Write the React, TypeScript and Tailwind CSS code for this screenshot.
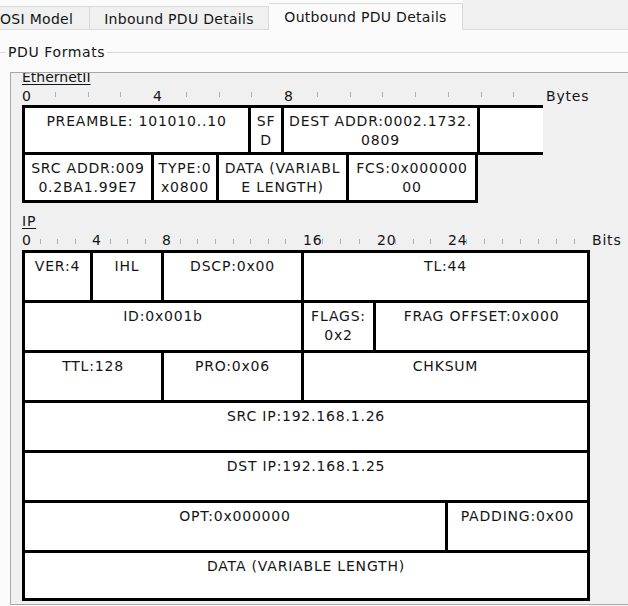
import clsx from 'clsx'

type Cell = { lines: string[]; w: string; open?: boolean }
type Group = { label: string; n: number; w: string }

const ethRows: { h: string; cells: Cell[] }[] = [
  {
    h: 'h-[50px]',
    cells: [
      { lines: ['PREAMBLE: 101010..10'], w: 'w-[229px]' },
      { lines: ['SF', 'D'], w: 'w-[36px]' },
      { lines: ['DEST ADDR:0002.1732.', '0809'], w: 'w-[199px]' },
      { lines: [], w: 'w-[66px]', open: true },
    ],
  },
  {
    h: 'h-[51px]',
    cells: [
      { lines: ['SRC ADDR:009', '0.2BA1.99E7'], w: 'w-[132px]' },
      { lines: ['TYPE:0', 'x0800'], w: 'w-[68px]' },
      { lines: ['DATA (VARIABL', 'E LENGTH)'], w: 'w-[133px]' },
      { lines: ['FCS:0x000000', '00'], w: 'w-[132px]' },
    ],
  },
]

const ipRows: { h: string; cells: Cell[] }[] = [
  {
    h: 'h-[53px]',
    cells: [
      { lines: ['VER:4'], w: 'w-[71px]' },
      { lines: ['IHL'], w: 'w-[74px]' },
      { lines: ['DSCP:0x00'], w: 'w-[143px]' },
      { lines: ['TL:44'], w: 'w-[289px]' },
    ],
  },
  {
    h: 'h-[53px]',
    cells: [
      { lines: ['ID:0x001b'], w: 'w-[282px]' },
      { lines: ['FLAGS:', '0x2'], w: 'w-[75px]' },
      { lines: ['FRAG OFFSET:0x000'], w: 'w-[217px]' },
    ],
  },
  {
    h: 'h-[53px]',
    cells: [
      { lines: ['TTL:128'], w: 'w-[142px]' },
      { lines: ['PRO:0x06'], w: 'w-[143px]' },
      { lines: ['CHKSUM'], w: 'w-[289px]' },
    ],
  },
  { h: 'h-[53px]', cells: [{ lines: ['SRC IP:192.168.1.26'], w: 'w-[568px]' }] },
  { h: 'h-[53px]', cells: [{ lines: ['DST IP:192.168.1.25'], w: 'w-[568px]' }] },
  {
    h: 'h-[53px]',
    cells: [
      { lines: ['OPT:0x000000'], w: 'w-[426px]' },
      { lines: ['PADDING:0x00'], w: 'w-[145px]' },
    ],
  },
  { h: 'h-[51px]', cells: [{ lines: ['DATA (VARIABLE LENGTH)'], w: 'w-[568px]' }] },
]

const byteGroups: Group[] = [
  { label: '0', n: 4, w: 'w-[131px]' },
  { label: '4', n: 4, w: 'w-[131px]' },
  { label: '8', n: 8, w: 'w-[262px]' },
]

const bitGroups: Group[] = [
  { label: '0', n: 4, w: 'w-[70px]' },
  { label: '4', n: 4, w: 'w-[70px]' },
  { label: '8', n: 8, w: 'w-[141px]' },
  { label: '16', n: 4, w: 'w-[74px]' },
  { label: '20', n: 4, w: 'w-[71px]' },
  { label: '24', n: 8, w: 'w-[144px]' },
]

const PduTable = ({ rows }: { rows: { h: string; cells: Cell[] }[] }) => (
  <div>
    {rows.map((row, r) => (
      <div key={r} className={clsx('flex', row.h, r > 0 && '-mt-[3px]')}>
        {row.cells.map((c, i) => (
          <div
            key={i}
            className={clsx(
              'shrink-0 bg-white border-[3px] border-black pt-[4px] text-center leading-[19px] whitespace-nowrap',
              c.w,
              i > 0 && '-ml-[3px]',
              c.open && 'border-r-0'
            )}
          >
            {c.lines.map((l, j) => (
              <div key={j}>{l}</div>
            ))}
          </div>
        ))}
      </div>
    ))}
  </div>
)

const Ruler = ({ groups, unit, tick }: { groups: Group[]; unit: string; tick: string }) => (
  <div className="flex leading-[16px] whitespace-nowrap">
    {groups.map((g, i) => (
      <div key={i} className={clsx('flex shrink-0', g.w)}>
        {Array.from({ length: g.n }).map((_, j) => (
          <div key={j} className="flex-1 min-w-0">
            {j === 0 ? (
              <span>{g.label}</span>
            ) : (
              <span className={clsx('block w-px bg-[#9fb2c8]', tick)} />
            )}
          </div>
        ))}
      </div>
    ))}
    <span>{unit}</span>
  </div>
)

export default function App() {
  return (
    <div className="w-[628px] h-[606px] overflow-hidden bg-[#fbfbfb] text-[14px] text-[#151515] font-['DejaVu_Sans',sans-serif]">
      {/* tab strip */}
      <div className="flex h-[30px] tracking-[0.3px]">
        <div className="mt-[6px] h-[24px] w-[90px] shrink-0 bg-[#f0f0f0] border-t border-r border-b border-[#d9d9d9] leading-[24px]">
          OSI Model
        </div>
        <div className="mt-[6px] h-[24px] w-[179px] shrink-0 bg-[#f0f0f0] border-t border-r border-b border-[#d9d9d9] text-center leading-[24px]">
          Inbound PDU Details
        </div>
        <div className="mt-[3px] h-[27px] w-[194px] shrink-0 bg-[#fbfbfb] border-t border-r border-[#d9d9d9] text-center leading-[26px]">
          Outbound PDU Details
        </div>
        <div className="flex-1 bg-[#f0f0f0] border-b border-[#d9d9d9]" />
      </div>

      {/* group title */}
      <div className="flex items-center h-[42px] pt-[3px] tracking-[0.6px]">
        <span className="w-[6px] h-px bg-[#dadada]" />
        <span className="px-[2px]">PDU Formats</span>
        <span className="flex-1 h-px bg-[#dadada]" />
      </div>

      <div className="ml-[10px] w-[640px] h-[533px] overflow-hidden border border-[#a8a8a8] bg-[#f0f0f0] pl-[11px] tracking-[0.8px]">
        <div className="-mt-[4px] h-[17px] leading-[17px] underline underline-offset-[2px] tracking-normal">
          EthernetII
        </div>
        <div className="h-[19px] pt-[2px]">
          <Ruler groups={byteGroups} unit="Bytes" tick="mt-[4px] h-[5px]" />
        </div>
        <PduTable rows={ethRows} />

        <div className="mt-[10px] h-[17px] leading-[17px] underline underline-offset-[2px]">IP</div>
        <div className="h-[20px] pt-[2px]">
          <Ruler groups={bitGroups} unit="Bits" tick="mt-[7px] h-[5px]" />
        </div>
        <PduTable rows={ipRows} />
      </div>
    </div>
  )
}
